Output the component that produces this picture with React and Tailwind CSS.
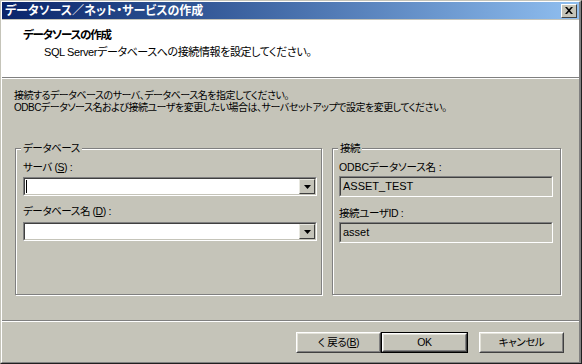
import React from "react";

const sunkenOuter = "border border-t-[#808080] border-l-[#808080] border-r-white border-b-white";
const sunkenInner = "border border-t-[#404040] border-l-[#404040] border-r-[#c5c4b9] border-b-[#c5c4b9]";

function DropButton() {
  return (
    <div className="w-[16px] h-[15px] bg-[#c5c4b9] border border-t-[#e8e8e0] border-l-[#e8e8e0] border-r-[#404040] border-b-[#404040] flex items-center justify-center">
      <svg width="7" height="4" viewBox="0 0 7 4"><path d="M0 0h7L3.5 4z" fill="#000" /></svg>
    </div>
  );
}

function Combo({ caret }) {
  return (
    <div className={`${sunkenOuter} h-[19px] w-[294px]`}>
      <div className={`${sunkenInner} h-full bg-white flex items-center justify-between`}>
        <div className="pl-[1px] h-full flex items-center">
          {caret ? <div className="w-[1px] h-[13px] bg-black" /> : null}
        </div>
        <DropButton />
      </div>
    </div>
  );
}

function ReadBox({ value }) {
  return (
    <div className={`${sunkenOuter} h-[21px] w-[214px]`}>
      <div className={`${sunkenInner} h-full bg-[#c5c4b9] flex items-center pl-[2px] text-[11px] tracking-normal text-black`}>
        {value}
      </div>
    </div>
  );
}

function Group({ label, className, children }) {
  return (
    <div className={`relative border border-[#808080] shadow-[inset_1px_1px_0_#fff,1px_1px_0_#fff] ${className}`}>
      <div className="absolute -top-[8px] left-[5px] px-[2px] bg-[#c5c4b9] leading-[14px]">{label}</div>
      {children}
    </div>
  );
}

function Button({ children, def }) {
  return (
    <div className={`h-[21px] ${def ? "w-[87px] border border-black" : "w-[85px]"}`}>
      <div className="h-full border border-t-white border-l-white border-r-[#404040] border-b-[#404040] bg-[#c5c4b9]">
        <div className="h-full border border-t-[#e4e3da] border-l-[#e4e3da] border-r-[#808080] border-b-[#808080] flex items-center justify-center">
          {children}
        </div>
      </div>
    </div>
  );
}

export default function App() {
  return (
    <div className="w-[582px] h-[364px] overflow-hidden font-['Liberation_Sans','Noto_Sans_CJK_JP',sans-serif] [font-feature-settings:'palt'] text-[10.5px] tracking-[-0.4px] text-black bg-[#c5c4b9]">
      <div className="w-full h-full border-t border-l border-t-[#c5c4b9] border-l-[#c5c4b9] border-r border-b border-r-[#202020] border-b-[#202020]">
        <div className="w-full h-full flex flex-col border-t border-l border-t-white border-l-white border-r-2 border-b border-r-[#808080] border-b-[#808080]">
          {/* title bar */}
          <div className="h-[17px] shrink-0 flex items-center justify-between pl-[3px] pr-[2px] bg-linear-to-r from-[#0a246a] to-[#90bff0]">
            <span className="text-white font-bold text-[12px] tracking-normal leading-none">データソース／ネット・サービスの作成</span>
            <div className="w-[16px] h-[14px] bg-[#c5c4b9] border border-t-white border-l-white border-r-[#404040] border-b-[#404040] flex items-center justify-center">
              <svg width="8" height="7" viewBox="0 0 8 7">
                <path d="M0 0h2l2 2.2L6 0h2L5 3.5 8 7H6L4 4.8 2 7H0l3-3.5z" fill="#000" />
              </svg>
            </div>
          </div>
          <div className="h-[1px] shrink-0" />
          {/* header */}
          <div className="h-[57px] shrink-0 bg-white pt-[8px]">
            <div className="pl-[21px] font-bold text-[11.5px] tracking-[-1.2px] leading-[15px]">データソースの作成</div>
            <div className="pl-[42px] mt-[2px] leading-[14px] text-[11px]">SQL Serverデータベースへの接続情報を設定してください。</div>
          </div>
          <div className="h-[2px] shrink-0 border-t border-t-[#808080] border-b border-b-white" />
          {/* body */}
          <div className="flex-1 flex flex-col pl-[12px] pt-[11px]">
            <div className="leading-[12px] text-[10px] tracking-[-0.5px]">
              <div>接続するデータベースのサーバ、データベース名を指定してください。</div>
              <div>ODBCデータソース名および接続ユーザを変更したい場合は、サーバセットアップで設定を変更してください。</div>
            </div>
            <div className="flex gap-[10px] mt-[34px] ml-[1px]">
              <Group label="データベース" className="w-[307px] h-[147px] pl-[7px] pt-[11px]">
                <div className="leading-[14px] mb-[3px]">サーバ (<span className="underline">S</span>) :</div>
                <Combo caret />
                <div className="leading-[14px] mt-[8px] mb-[4px]">データベース名 (<span className="underline">D</span>) :</div>
                <Combo />
              </Group>
              <Group label="接続" className="w-[229px] h-[147px] pl-[6px] pt-[11px]">
                <div className="leading-[14px] mb-[2px] tracking-[-0.1px]">ODBCデータソース名 :</div>
                <ReadBox value="ASSET_TEST" />
                <div className="leading-[14px] mt-[9px] mb-[2px]">接続ユーザID :</div>
                <ReadBox value="asset" />
              </Group>
            </div>
          </div>
          <div className="h-[2px] shrink-0 border-t border-t-[#808080] border-b border-b-white" />
          {/* footer */}
          <div className="h-[40px] shrink-0 flex items-start pt-[10px] pl-[294px]">
            <Button>く 戻る(<span className="underline">B</span>)</Button>
            <Button def>OK</Button>
            <div className="w-[11px]" />
            <Button>キャンセル</Button>
          </div>
        </div>
      </div>
    </div>
  );
}
